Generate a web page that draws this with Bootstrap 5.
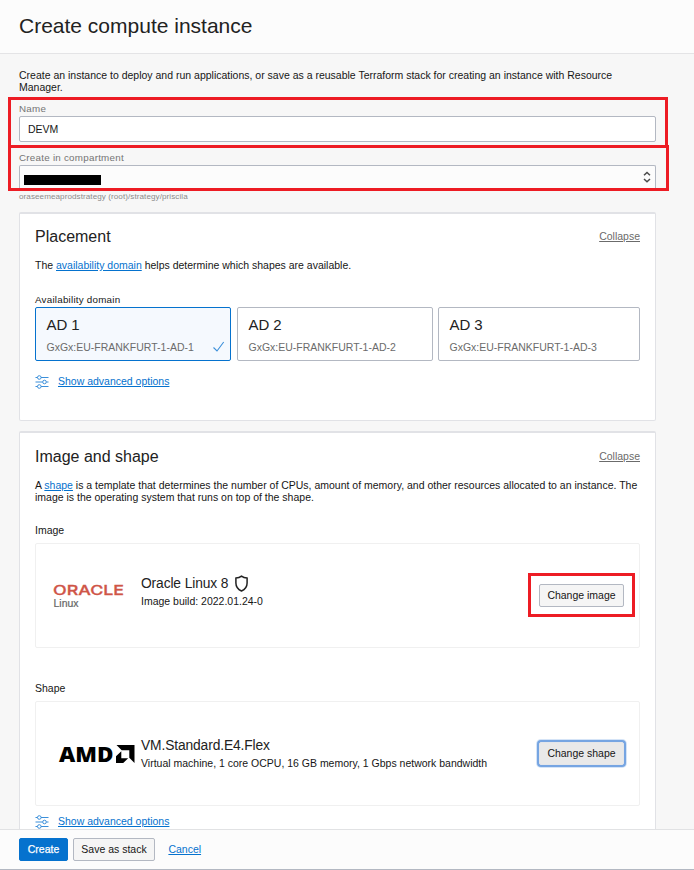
<!DOCTYPE html>
<html lang="en">
<head>
<meta charset="utf-8">
<meta name="viewport" content="width=device-width, initial-scale=1">
<title>Create compute instance</title>
<link href="https://cdn.jsdelivr.net/npm/bootstrap@5.3.0/dist/css/bootstrap.min.css" rel="stylesheet">
<style>
body{font-family:"Liberation Sans",Arial,sans-serif;font-size:10.49px;letter-spacing:.005px;line-height:12px;color:#161616;background:#f7f7f7;height:870px;overflow:hidden}
a{color:#0572ce}
.page-head{height:54px;background:#fcfcfc;border-bottom:1px solid #e4e4e6;padding:0 19px}
.page-head h1{font-size:21px;line-height:52px;letter-spacing:0;color:#222}
.page-main{height:775px;padding:16px 38px 0 19px;overflow:hidden}
.intro{width:610px;height:24px}
.field{position:relative}
.field-label{font-size:9.8px;letter-spacing:.25px;color:#747474;height:16px;padding-top:4px}
.hl{position:absolute;border:3px solid #ed1c24;pointer-events:none}
.hl-name{left:-11px;top:-2px;width:660px;height:51px}
.hl-comp{left:-11px;top:-3px;width:661px;height:46px}
.hl-btn{left:-11px;top:-11px;width:107px;height:44px}
.field-name{margin-top:5px;height:49px}
.field-name .form-control{height:26px;margin-top:1px;padding:0 8px;border:1px solid #b3b8c2;border-radius:2px;font-size:10.49px;color:#161616}
.field-comp{height:43px}
.picker{height:24px;margin-top:1px;padding:0 4px;border:1px solid #b3b8c2;border-bottom:0;border-radius:2px 2px 0 0;background:#fcfcfc}
.redacted{width:77px;height:10px;background:#000;margin-top:9px}
.path-note{font-size:8.1px;letter-spacing:.07px;line-height:10px;color:#8b8b8b;height:21px;padding-top:.5px}
.panel{background:#fff;border:1px solid #e1e2e6;border-top-width:2px;border-radius:2px;padding:0 15px}
.panel h2{font-size:16px;line-height:20px;letter-spacing:0;color:#222}
.panel-top{padding-top:13px;height:46px}
.placement{height:209px}
.shape-panel{margin-top:10px;height:420px}
.shape-panel .panel-top{padding-top:14px;height:47px}
.collapse-link{color:#6b6b6b}
.ad-label{font-size:9.8px;letter-spacing:.23px;margin-top:22px;height:13px}
.ad-row{gap:5px}
.ad{border:1px solid #b3b8c2;border-radius:2px;height:54px;width:196px;padding:8px 10.5px 0;color:#6b6b6b}
.ad b{display:block;font-weight:400;font-size:15px;line-height:18px;letter-spacing:-.1px;color:#222;margin-bottom:8px}
.ad.chosen{border-color:#0572ce;background:#f5f9fe;margin-right:1px}
.tick{margin:-1px -5px 0 0}
.adv{height:13px;margin-top:15px}
.shape-panel .adv{margin-top:10px}
.adv svg{margin-right:9px;margin-top:-1px}
.image-label{margin-top:21px}
.shape-label{margin-top:35px}
.choice{height:105px;border:1px solid #f0f0f0;border-radius:2px;padding-right:15px;margin-top:6px}
.logo-box{width:105px}
.choice-name{font-size:13.8px;letter-spacing:-.12px;line-height:16px;height:16px;color:#222}
.image-text{padding-bottom:8px}
.shield{margin:-1px 0 0 7px}
.btn{--bs-btn-font-size:10.49px;--bs-btn-line-height:12px;--bs-btn-padding-x:7px;--bs-btn-padding-y:0;--bs-btn-border-radius:2px;height:23px}
.btn-soft{--bs-btn-bg:#f5f5f5;--bs-btn-border-color:#b3b8c2;--bs-btn-color:#161616}
.btn-wide{width:85px}
.btn-focus{--bs-btn-bg:#e9e9e9;--bs-btn-border-color:#e4e6ea;box-shadow:0 0 0 2px #76a5e2,0 0 0 3px #d5e4f7}
.btn-create{--bs-btn-bg:#0572ce;--bs-btn-border-color:#0572ce;--bs-btn-color:#fff;width:49px;-webkit-text-stroke:.25px #fff}
.save-btn{width:82px;margin-left:5px}
.cancel{margin-left:13.4px}
.page-foot{height:41px;background:#fcfcfc;border-top:1px solid #e1e2e4;border-bottom:1px solid #b3b8c2;padding:0 19px}
</style>
</head>
<body>
<svg class="d-none">
  <symbol id="sliders" viewBox="0 0 14 14"><g fill="none" stroke="#3b8fda" stroke-width="1"><path d="M0.500 2.500h2M6 2.500h7.500M.5 7h7M11.500 7h2M.5 11.500h2M6 11.500h7.500"/><circle cx="4.300" cy="2.500" r="1.800"/><circle cx="9.500" cy="7" r="1.800"/><circle cx="4.300" cy="11.500" r="1.800"/></g></symbol>
</svg>
<header class="page-head"><h1 class="m-0 fw-normal">Create compute instance</h1></header>
<main class="page-main">
  <p class="intro m-0">Create an instance to deploy and run applications, or save as a reusable Terraform stack for creating an instance with Resource Manager.</p>
  <div class="field field-name">
    <div class="hl hl-name"></div>
    <label class="field-label d-block" for="vm-name">Name</label>
    <input id="vm-name" class="form-control" value="DEVM">
  </div>
  <div class="field field-comp">
    <div class="field-label">Create in compartment</div>
    <div class="picker d-flex justify-content-between align-items-start">
      <span class="redacted"></span>
      <svg width="8" height="14" viewBox="0 0 8 14" class="mt-1" fill="none" stroke="#4a4a4a" stroke-width="1.500"><path d="M1 5.300 4 2.500l3 2.800M1 9l3 2.800L7 9"/></svg>
    </div>
    <div class="hl hl-comp"></div>
  </div>
  <div class="path-note">oraseemeaprodstrategy (root)/strategy/priscila</div>

  <section class="panel placement">
    <div class="panel-top d-flex justify-content-between"><h2 class="m-0 fw-normal">Placement</h2><a href="#" class="collapse-link pt-1">Collapse</a></div>
    <p class="m-0">The <a href="#">availability domain</a> helps determine which shapes are available.</p>
    <div class="ad-label">Availability domain</div>
    <div class="ad-row d-flex">
      <div class="ad chosen"><b>AD 1</b><div class="d-flex justify-content-between"><span>GxGx:EU-FRANKFURT-1-AD-1</span><svg width="12" height="12" viewBox="0 0 12 12" class="tick flex-shrink-0" fill="none" stroke="#3b8fda" stroke-width="1.100"><path d="M.5 6.500 4 10 10.700 1"/></svg></div></div>
      <div class="ad"><b>AD 2</b>GxGx:EU-FRANKFURT-1-AD-2</div>
      <div class="ad flex-fill"><b>AD 3</b>GxGx:EU-FRANKFURT-1-AD-3</div>
    </div>
    <div class="adv d-flex"><svg width="14" height="14"><use href="#sliders"/></svg><a href="#">Show advanced options</a></div>
  </section>

  <section class="panel shape-panel">
    <div class="panel-top d-flex justify-content-between"><h2 class="m-0 fw-normal">Image and shape</h2><a href="#" class="collapse-link pt-1">Collapse</a></div>
    <p class="m-0">A <a href="#">shape</a> is a template that determines the number of CPUs, amount of memory, and other resources allocated to an instance. The image is the operating system that runs on top of the shape.</p>
    <div class="image-label">Image</div>
    <div class="choice d-flex align-items-center">
      <div class="logo-box"><svg class="d-block" width="105" height="30" viewBox="0 0 105 30"><text x="17" y="14.300" textLength="71" lengthAdjust="spacingAndGlyphs" font-family="Inter,sans-serif" font-size="13" font-weight="500" fill="#cf5547" stroke="#cf5547" stroke-width=".3">ORACLE</text><text x="17.500" y="25.500" textLength="25" lengthAdjust="spacingAndGlyphs" font-size="10" fill="#666" stroke="#666" stroke-width=".2">Linux</text></svg></div>
      <div class="flex-fill image-text">
        <div class="choice-name d-flex">Oracle Linux 8<svg width="13" height="17" viewBox="0 0 13 17" class="shield" fill="none" stroke="#222" stroke-width="1.500"><path d="M6.500 1.200C5 2.400 3.300 3 .9 3.100V8c0 4 2.200 6.500 5.600 8 3.400-1.500 5.600-4 5.600-8V3.100C9.700 3 8 2.400 6.500 1.200z"/></svg></div>
        <div class="mt-1">Image build: 2022.01.24-0</div>
      </div>
      <div class="position-relative"><button class="btn btn-soft btn-wide d-block">Change image</button><div class="hl hl-btn"></div></div>
    </div>
    <div class="shape-label">Shape</div>
    <div class="choice d-flex align-items-center">
      <div class="logo-box"><svg class="d-block" width="105" height="30" viewBox="0 0 105 30"><text x="23" y="22.700" textLength="54.500" lengthAdjust="spacingAndGlyphs" font-family="'Open Sans',sans-serif" font-size="21.500" font-weight="800">AMD</text><path d="M80.500 6H98.500V24L93.300 18.800V11.200H85.700zM85.300 12.300V19.200H92.200L87.200 24H80V17.300z"/></svg></div>
      <div class="flex-fill">
        <div class="choice-name">VM.Standard.E4.Flex</div>
        <div class="mt-1">Virtual machine, 1 core OCPU, 16 GB memory, 1 Gbps network bandwidth</div>
      </div>
      <button class="btn btn-soft btn-wide btn-focus">Change shape</button>
    </div>
    <div class="adv d-flex"><svg width="14" height="14"><use href="#sliders"/></svg><a href="#">Show advanced options</a></div>
  </section>
</main>
<footer class="page-foot d-flex align-items-center">
  <button class="btn btn-create">Create</button>
  <button class="btn btn-soft save-btn">Save as stack</button>
  <a href="#" class="cancel">Cancel</a>
</footer>
<script src="https://cdn.jsdelivr.net/npm/bootstrap@5.3.0/dist/js/bootstrap.bundle.min.js"></script>
</body>
</html>
